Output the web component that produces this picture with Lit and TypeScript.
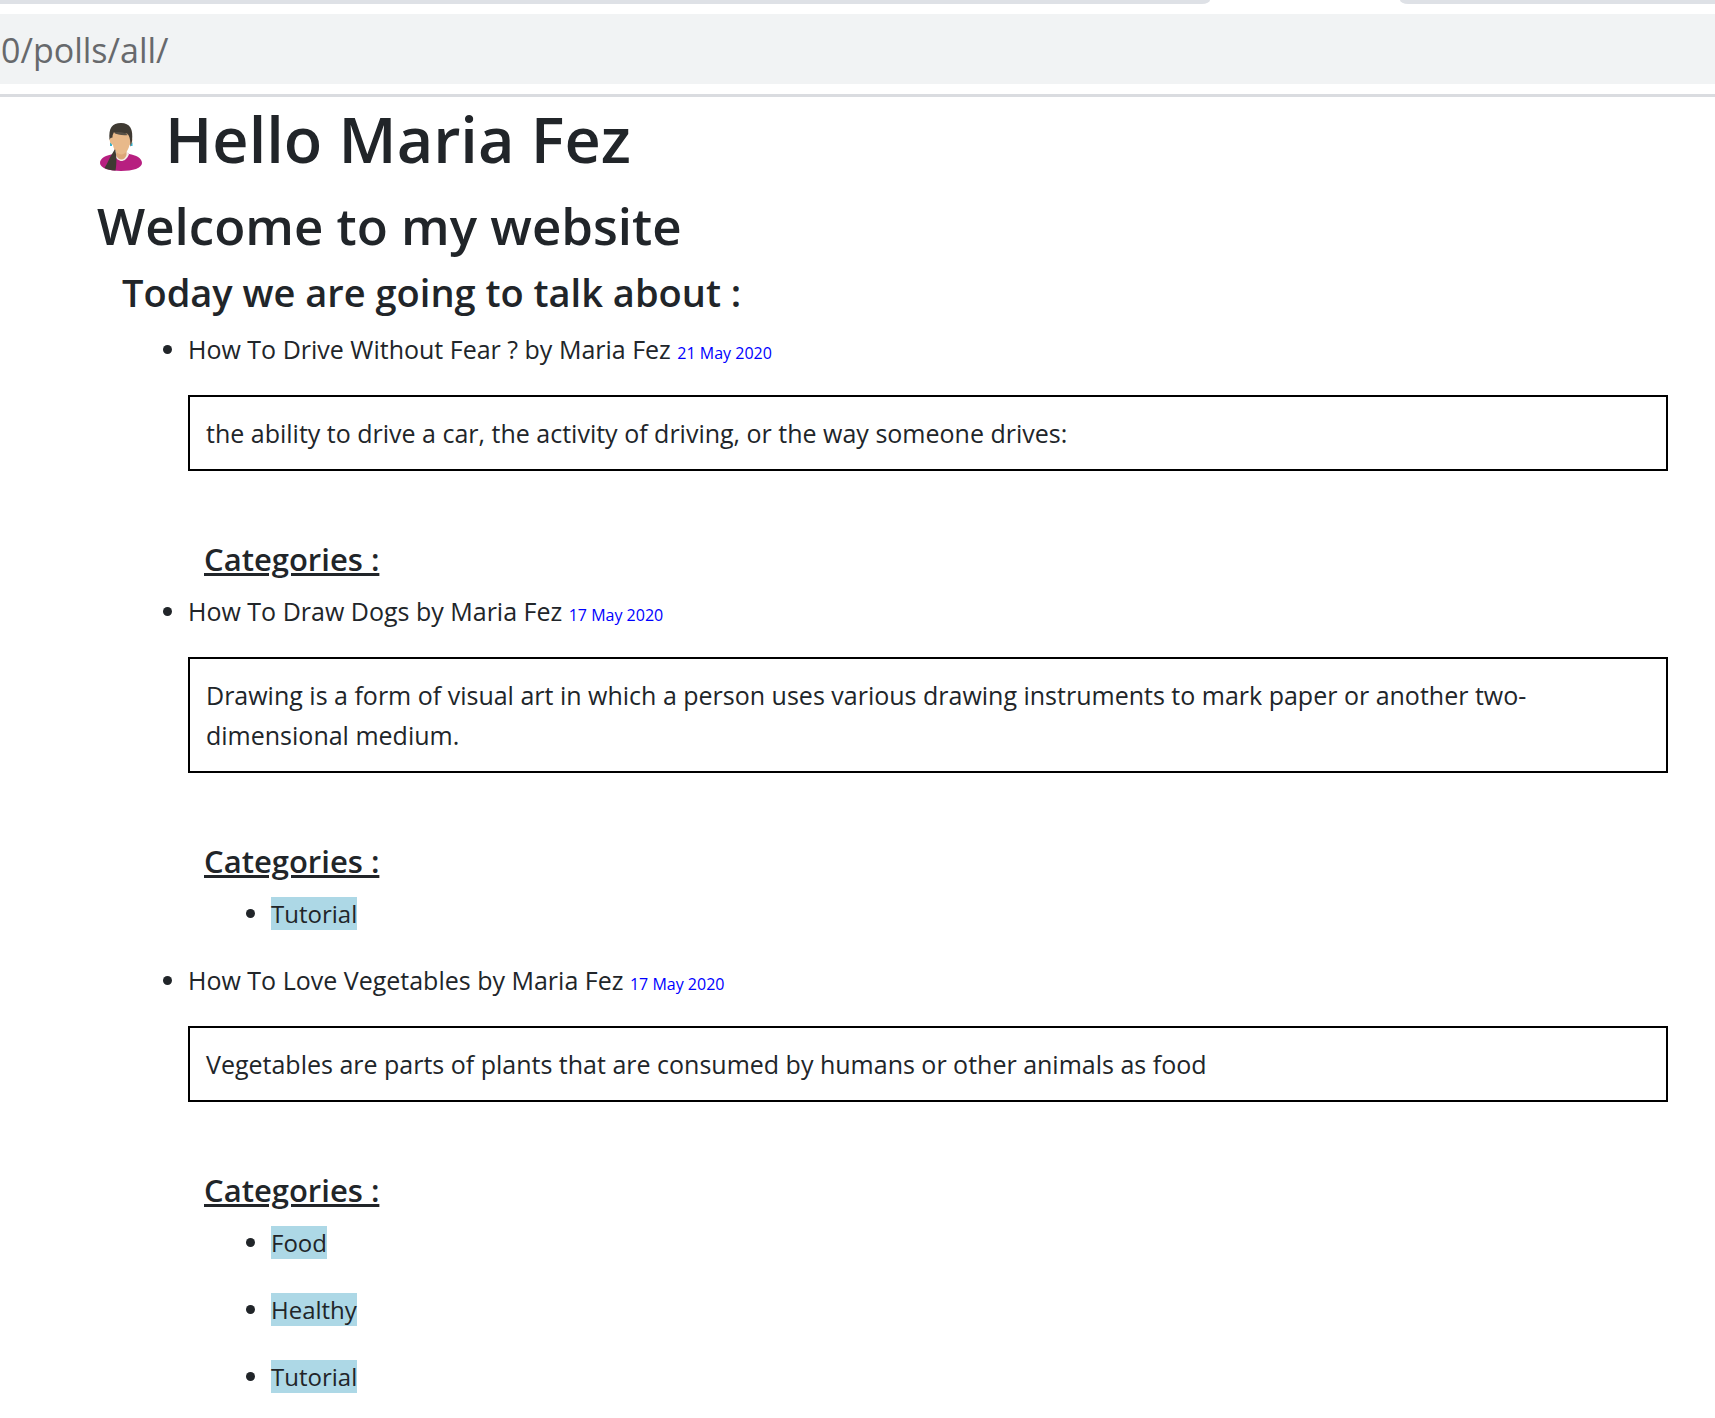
import { LitElement, html, css, svg } from "lit";
import { customElement, property } from "lit/decorators.js";

interface Post {
  title: string;
  author: string;
  date: string;
  body: string;
  categories: string[];
}

const POSTS: Post[] = [
  {
    title: "How To Drive Without Fear ?",
    author: "Maria Fez",
    date: "21 May 2020",
    body: "the ability to drive a car, the activity of driving, or the way someone drives:",
    categories: [],
  },
  {
    title: "How To Draw Dogs",
    author: "Maria Fez",
    date: "17 May 2020",
    body: "Drawing is a form of visual art in which a person uses various drawing instruments to mark paper or another two-dimensional medium.",
    categories: ["Tutorial"],
  },
  {
    title: "How To Love Vegetables",
    author: "Maria Fez",
    date: "17 May 2020",
    body: "Vegetables are parts of plants that are consumed by humans or other animals as food",
    categories: ["Food", "Healthy", "Tutorial"],
  },
];

const avatar = svg`
  <path d="M3 40C3 35 9 32 17 31L20 29H29L32 31C39 32 45 35 45 40C45 45 36 48 24 48S3 45 3 40Z" fill="#b71f80"/>
  <path d="M17 31L19 29H30L32 31.500C30 36 27 38 24.500 38S19 36 17 31Z" fill="#f5efe9"/>
  <path d="M19.500 26H29.500V32C28.500 35 26.500 36.500 24.500 36.500S20 35 19 32Z" fill="#dca678"/>
  <path d="M14 19.500V23M34.500 19.500V23" stroke="#35b4cf" stroke-width="2"/>
  <path d="M13 15C12 16 13 20 14.500 21L16 22C17 28 21 31.500 24.500 31.500S31 28 32.500 22L34 21C36 19 35.500 15 34.500 15V8H14Z" fill="#e8b98a"/>
  <path d="M12.500 17C11.500 5 15 0 24 0S36.500 6 35 18L33.500 24C33.500 18 33 13 30 10.500C24 12 19 11 17 9C15.500 12 15.500 13 15.500 14.500L13.500 15Z" fill="#3f3a33"/>
  <path d="M16.500 9.500C21 8.500 27 8.500 31 12C26 12.500 20 12 16.500 9.500Z" fill="#575047"/>
  <path d="M18 26C19.500 31 20 40 18.500 47.500C14 47.500 10 46.500 7.500 45C11 40 12 35 15 31Z" fill="#3f3a33"/>`;

@customElement("browser-bar")
export class BrowserBar extends LitElement {
  @property() address = "";

  static styles = css`
    :host {
      display: block;
      border-bottom: 3px solid #dadce0;
      background: #fff;
    }
    .tabs {
      display: flex;
      height: 4px;
      overflow: hidden;
    }
    .tab {
      background: #dee1e6;
      flex: 1210 1 0;
      border-radius: 0 0 12px 0 / 0 0 6px 0;
    }
    .tab.next {
      flex-grow: 315;
      border-radius: 0 0 0 12px / 0 0 0 6px;
    }
    .gap {
      flex: 190 1 0;
    }
    .address {
      display: block;
      box-sizing: border-box;
      width: 100%;
      height: 70px;
      margin: 10px 0;
      padding: 2px 0 0 1px;
      border: 0;
      outline: 0;
      background: #f1f3f4;
      color: #67696c;
      font: 400 34px/68px "Open Sans", "Noto Sans", sans-serif;
    }
  `;

  render() {
    return html`
      <div class="tabs">
        <div class="tab"></div>
        <div class="gap"></div>
        <div class="tab next"></div>
      </div>
      <input class="address" type="text" aria-label="Address" .value=${this.address} />
    `;
  }
}

@customElement("poll-post")
export class PollPost extends LitElement {
  @property({ attribute: false }) post!: Post;

  static styles = css`
    :host {
      display: block;
    }
    .title,
    .body,
    .tag-line {
      margin: 0;
      line-height: 40px;
    }
    .date {
      color: #0000ff;
      font-size: 16px;
      line-height: 20px;
    }
    .body {
      margin: 26px 0 68px;
      padding: 16px;
      border: 2px solid #000;
    }
    .heading {
      margin: 0 16px 12px;
      font-size: 31px;
      line-height: 40px;
      font-weight: 600;
      text-decoration: underline;
      text-decoration-thickness: 3px;
    }
    .tags {
      margin: 0;
      padding-left: 83px;
    }
    .tag-line {
      margin-bottom: 27px;
    }
    .tag {
      background: #add8e6;
      font-size: 24px;
      line-height: 20px;
    }
  `;

  render() {
    const { title, author, date, body, categories } = this.post;
    return html`
      <p class="title">${title} by ${author} <time class="date">${date}</time></p>
      <p class="body">${body}</p>
      <h4 class="heading">Categories :</h4>
      ${categories.length
        ? html`<ul class="tags">
            ${categories.map((c) => html`<li class="tag-line"><span class="tag">${c}</span></li>`)}
          </ul>`
        : null}
    `;
  }
}

@customElement("app-root")
export class AppRoot extends LitElement {
  static styles = css`
    :host {
      display: block;
      min-height: 100vh;
      background: #fff;
      color: #212529;
      font: 400 25px/40px "Open Sans", "Noto Sans", sans-serif;
    }
    .page {
      padding: 2px 47px 0 97px;
    }
    h1,
    h2,
    h3 {
      margin: 0;
      font-weight: 600;
    }
    .hello {
      display: flex;
      align-items: center;
      gap: 20px;
      font-size: 63px;
      line-height: 80px;
    }
    .avatar {
      width: 48px;
      height: 48px;
      margin-top: 16px;
      flex: none;
    }
    .welcome {
      margin-top: 14px;
      font-size: 51px;
      line-height: 64px;
    }
    .topic {
      margin: 11px 25px 13px;
      font-size: 38px;
      line-height: 48px;
    }
    .posts {
      margin: 0;
      padding-left: 91px;
    }
  `;

  render() {
    return html`
      <browser-bar address="0/polls/all/"></browser-bar>
      <main class="page">
        <h1 class="hello">
          <svg class="avatar" viewBox="0 0 48 48" aria-hidden="true">${avatar}</svg>
          <span>Hello Maria Fez</span>
        </h1>
        <h2 class="welcome">Welcome to my website</h2>
        <h3 class="topic">Today we are going to talk about :</h3>
        <ul class="posts">
          ${POSTS.map((p) => html`<li><poll-post .post=${p}></poll-post></li>`)}
        </ul>
      </main>
    `;
  }
}
